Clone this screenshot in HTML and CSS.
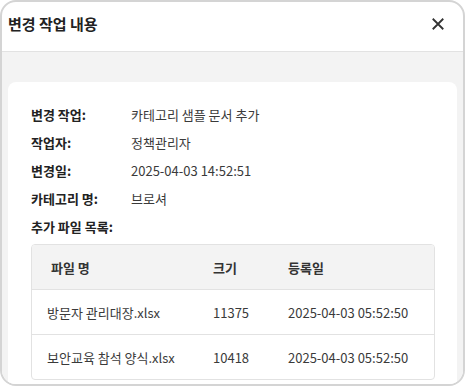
FILE: index.html
```html
<!DOCTYPE html>
<html>
<head>
  <title>변경 작업 내용</title>
  <link rel="stylesheet" href="styles.css">
</head>
<body>
  <div class="modal">
    <div class="modal-header">
      <h2>변경 작업 내용</h2>
      <button class="close-button" aria-label="닫기">
        <svg viewBox="0 0 24 24">
          <path d="M5 5l14 14M19 5L5 19"/>
        </svg>
      </button>
    </div>

    <div class="modal-body">
      <div class="card">
        <div class="info-row">
          <span class="info-label">변경 작업:</span>
          <span class="info-value">카테고리 샘플 문서 추가</span>
        </div>
        <div class="info-row">
          <span class="info-label">작업자:</span>
          <span class="info-value">정책관리자</span>
        </div>
        <div class="info-row">
          <span class="info-label">변경일:</span>
          <span class="info-value">2025-04-03 14:52:51</span>
        </div>
        <div class="info-row">
          <span class="info-label">카테고리 명:</span>
          <span class="info-value">브로셔</span>
        </div>
        <div class="info-row">
          <span class="info-label">추가 파일 목록:</span>
        </div>

        <table class="file-table">
          <thead>
            <tr>
              <th class="col-name">파일 명</th>
              <th class="col-size">크기</th>
              <th>등록일</th>
            </tr>
          </thead>
          <tbody>
            <tr>
              <td>방문자 관리대장.xlsx</td>
              <td>11375</td>
              <td>2025-04-03 05:52:50</td>
            </tr>
            <tr>
              <td>보안교육 참석 양식.xlsx</td>
              <td>10418</td>
              <td>2025-04-03 05:52:50</td>
            </tr>
          </tbody>
        </table>
      </div>
    </div>
  </div>
</body>
</html>
```

FILE: styles.css
```css
html, body {
  margin: 0;
  padding: 0;
}

body {
  width: 465px;
  height: 386px;
  font-family: "Noto Sans CJK KR", "Noto Sans", sans-serif;
  color: #333333;
  background-color: #ffffff;
  overflow: hidden;
}

.modal {
  box-sizing: border-box;
  width: 465px;
  height: 386px;
  border: 2px solid #d4d4d4;
  border-radius: 16px;
  background-color: #ffffff;
  display: flex;
  flex-direction: column;
  overflow: hidden;
}

.modal-header {
  display: flex;
  align-items: center;
  justify-content: space-between;
  height: 49px;
  padding: 0 16px 0 6px;
  border-bottom: 1px solid #e2e2e2;
  flex-shrink: 0;
}

h2 {
  margin: 0 0 6px;
  font-size: 15px;
  font-weight: 700;
  color: #222222;
}

.close-button {
  width: 18px;
  height: 18px;
  padding: 0;
  margin-bottom: 6px;
  border: none;
  background: none;
  cursor: pointer;
  display: flex;
  align-items: center;
  justify-content: center;
}

.close-button svg {
  width: 18px;
  height: 18px;
  stroke: #333333;
  stroke-width: 2.4;
  fill: none;
}

.modal-body {
  flex: 1;
  background-color: #f3f3f3;
  padding: 30px 6px 0;
  overflow: hidden;
}

.card {
  background-color: #ffffff;
  border-radius: 8px;
  padding: 18px 22px 20px 23px;
}

.info-row {
  display: flex;
  height: 28px;
  align-items: center;
  font-size: 13px;
}

.info-label {
  width: 100px;
  flex-shrink: 0;
  font-weight: 700;
  color: #222222;
}

.info-value {
  color: #3a3a3a;
}

.file-table {
  width: 100%;
  margin-top: 4px;
  border-collapse: separate;
  border-spacing: 0;
  border: 1px solid #e2e2e2;
  border-radius: 4px;
  font-size: 13px;
  overflow: hidden;
}

.file-table th,
.file-table td {
  height: 44px;
  padding: 0 15px;
  text-align: left;
}

.file-table th {
  background-color: #f3f3f3;
  font-weight: 700;
  color: #333333;
  border-bottom: 1px solid #e2e2e2;
}

.file-table th.col-name {
  padding-left: 19px;
}

.file-table td {
  color: #3a3a3a;
  border-bottom: 1px solid #e2e2e2;
}

.file-table tbody tr:last-child td {
  border-bottom: none;
}

.col-name {
  width: 132px;
}

.col-size {
  width: 45px;
}
```
